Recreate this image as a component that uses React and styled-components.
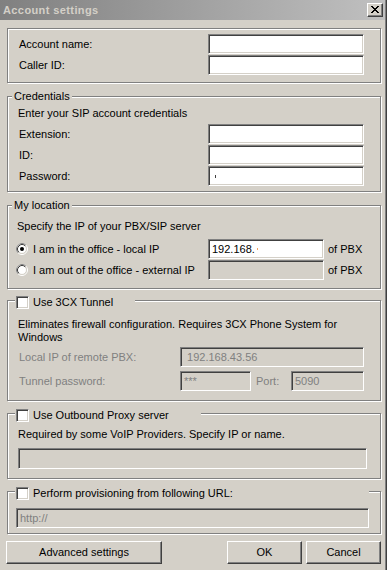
import React from "react";
import styled, { createGlobalStyle } from "styled-components";

const GlobalStyle = createGlobalStyle`
  html, body {
    margin: 0;
    padding: 0;
    background: #d4d0c8;
  }
  body {
    font-family: "Liberation Sans", Arial, sans-serif;
    font-size: 11px;
    color: #000;
  }
`;

const Window = styled.div`
  width: 387px;
  height: 570px;
  box-sizing: border-box;
  border-right: 1px solid #404040;
  background: #d4d0c8;
  overflow: hidden;
`;

const Client = styled.div`
  height: 100%;
  border-right: 1px solid #808080;
  display: flex;
  flex-direction: column;
`;

const TitleBar = styled.div`
  height: 20px;
  flex: none;
  display: flex;
  align-items: center;
  padding: 0 2px 0 3px;
  background: linear-gradient(to right, #808080, #c0c0c0);
`;

const Title = styled.div`
  flex: 1;
  color: #d4d0c8;
  font-weight: bold;
  letter-spacing: 0.4px;
  line-height: 13px;
`;

const CloseButton = styled.div`
  width: 16px;
  height: 14px;
  box-sizing: border-box;
  display: flex;
  align-items: center;
  justify-content: center;
  background: #d4d0c8;
  border: 1px solid;
  border-color: #fff #404040 #404040 #fff;
  box-shadow: inset -1px -1px 0 #808080;
  padding: 0 1px 1px 0;
`;

const Body = styled.div`
  display: flex;
  flex-direction: column;
  padding: 8px 4px 0 7px;
`;

const Group = styled.div`
  margin-top: ${(p) => p.$mt || 0}px;
  border: 1px solid #808080;
  box-shadow: inset 1px 1px 0 #fff, 1px 1px 0 #fff;
  display: flex;
  flex-direction: column;
`;

const Legend = styled.div`
  align-self: flex-start;
  display: flex;
  align-items: center;
  gap: 4px;
  height: 13px;
  line-height: 13px;
  margin: ${(p) => p.$top}px 0 0 ${(p) => p.$x}px;
  padding: 0 2px 0 ${(p) => (p.$check ? 1 : 2)}px;
  width: ${(p) => (p.$w ? `${p.$w}px` : "auto")};
  box-sizing: border-box;
  background: #d4d0c8;
  white-space: nowrap;
`;

const GroupBody = styled.div`
  display: flex;
  flex-direction: column;
  padding: ${(p) => p.$pad};
`;

const Desc = styled.div`
  line-height: 13px;
  margin: ${(p) => p.$mt || 0}px 0 0 ${(p) => p.$ml || 0}px;
`;

const Row = styled.div`
  display: flex;
  align-items: center;
  height: ${(p) => p.$h || 20}px;
  margin-top: ${(p) => p.$mt || 0}px;
`;

const Label = styled.span`
  flex: 1;
  line-height: 13px;
  padding-left: ${(p) => p.$indent || 0}px;
  color: ${(p) => (p.$disabled ? "#808080" : "#000")};
  white-space: nowrap;
`;

const Field = styled.div`
  box-sizing: border-box;
  width: ${(p) => (p.$w ? `${p.$w}px` : "100%")};
  height: ${(p) => p.$h || 20}px;
  flex: none;
  display: flex;
  align-items: center;
  padding: 0 3px;
  border: 1px solid;
  border-color: #808080 #fff #fff #808080;
  box-shadow: inset 1px 1px 0 #404040, inset -1px -1px 0 #d4d0c8;
  background: ${(p) => (p.$disabled ? "#d4d0c8" : "#fff")};
  color: ${(p) => (p.$disabled ? "#808080" : "#000")};
  line-height: 13px;
  white-space: nowrap;
`;

const Caret = styled.span`
  display: inline-block;
  width: 1px;
  height: ${(p) => p.$h}px;
  margin-left: ${(p) => p.$ml}px;
  background: ${(p) => p.$color};
`;

const Suffix = styled.span`
  width: ${(p) => p.$w}px;
  flex: none;
  padding-left: ${(p) => p.$pl}px;
  box-sizing: border-box;
  line-height: 13px;
  color: ${(p) => (p.$disabled ? "#808080" : "#000")};
`;

const Option = styled.label`
  flex: 1;
  display: flex;
  align-items: center;
  gap: 5px;
  line-height: 13px;
  white-space: nowrap;
`;

const CheckBox = styled.span`
  width: 13px;
  height: 13px;
  flex: none;
  box-sizing: border-box;
  border: 1px solid;
  border-color: #808080 #fff #fff #808080;
  box-shadow: inset 1px 1px 0 #404040, inset -1px -1px 0 #d4d0c8;
  background: #fff;
`;

const ButtonRow = styled.div`
  display: flex;
  margin: 7px 0 0 -1px;
  gap: 4px;
`;

const Button = styled.div`
  box-sizing: border-box;
  width: ${(p) => p.$w}px;
  height: 23px;
  margin-left: ${(p) => (p.$push ? "auto" : "0")};
  display: flex;
  align-items: center;
  justify-content: center;
  border: 1px solid;
  border-color: #fff #404040 #404040 #fff;
  box-shadow: inset -1px -1px 0 #808080;
  background: #d4d0c8;
  line-height: 13px;
`;

const CloseGlyph = () => (
  <svg width="8" height="7" viewBox="0 0 8 7" shapeRendering="crispEdges">
    <path
      fill="#000"
      d="M0 0h2v1H0zM6 0h2v1H6zM1 1h2v1H1zM5 1h2v1H5zM2 2h4v1H2zM3 3h2v1H3zM2 4h4v1H2zM1 5h2v1H1zM5 5h2v1H5zM0 6h2v1H0zM6 6h2v1H6z"
    />
  </svg>
);

const Radio = ({ checked }) => (
  <svg width="12" height="12" viewBox="0 0 12 12" style={{ flex: "none" }}>
    <circle cx="6" cy="6" r="5.5" fill="none" stroke="#fff" />
    <path d="M2.11 9.89A5.5 5.5 0 0 1 9.89 2.11" fill="none" stroke="#808080" />
    <circle cx="6" cy="6" r="4.5" fill="#fff" stroke="#d4d0c8" />
    <path d="M2.82 9.18A4.5 4.5 0 0 1 9.18 2.82" fill="none" stroke="#404040" />
    {checked && <circle cx="6" cy="6" r="2" fill="#000" />}
  </svg>
);

export default function App() {
  return (
    <>
      <GlobalStyle />
      <Window>
        <Client>
          <TitleBar>
            <Title>Account settings</Title>
            <CloseButton>
              <CloseGlyph />
            </CloseButton>
          </TitleBar>

          <Body>
            <Group>
              <GroupBody $pad="5px 16px 7px 10px">
                <Row>
                  <Label $indent={1}>Account name:</Label>
                  <Field $w={156} />
                </Row>
                <Row $mt={1}>
                  <Label $indent={1}>Caller ID:</Label>
                  <Field $w={156} />
                </Row>
              </GroupBody>
            </Group>

            <Group $mt={13}>
              <Legend $top={-7} $x={4}>Credentials</Legend>
              <GroupBody $pad="4px 16px 5px 10px">
                <Desc>Enter your SIP account credentials</Desc>
                <Row $mt={4}>
                  <Label $indent={1}>Extension:</Label>
                  <Field $w={156} />
                </Row>
                <Row $mt={1}>
                  <Label $indent={1}>ID:</Label>
                  <Field $w={156} />
                </Row>
                <Row $mt={1}>
                  <Label $indent={1}>Password:</Label>
                  <Field $w={156}>
                    <Caret $h={3} $ml={3} $color="#404040" />
                  </Field>
                </Row>
              </GroupBody>
            </Group>

            <Group $mt={13}>
              <Legend $top={-7} $x={4}>My location</Legend>
              <GroupBody $pad="8px 0 8px 8px">
                <Desc $ml={1}>Specify the IP of your PBX/SIP server</Desc>
                <Row $mt={6}>
                  <Option>
                    <Radio checked />I am in the office - local IP
                  </Option>
                  <Field $w={116}>
                    192.168.
                    <Caret $h={2} $ml={2} $color="#f0a060" />
                  </Field>
                  <Suffix $w={56} $pl={4}>of PBX</Suffix>
                </Row>
                <Row $mt={1}>
                  <Option>
                    <Radio />I am out of the office - external IP
                  </Option>
                  <Field $w={116} $disabled />
                  <Suffix $w={56} $pl={4}>of PBX</Suffix>
                </Row>
              </GroupBody>
            </Group>

            <Group $mt={11}>
              <Legend $top={-5} $x={7} $w={120} $check>
                <CheckBox />
                Use 3CX Tunnel
              </Legend>
              <GroupBody $pad="9px 16px 9px 10px">
                <Desc>
                  Eliminates firewall configuration. Requires 3CX Phone System for
                  <br />
                  Windows
                </Desc>
                <Row $mt={3}>
                  <Label $indent={1} $disabled>Local IP of remote PBX:</Label>
                  <Field $w={184} $disabled>
                    &nbsp;192.168.43.56
                  </Field>
                </Row>
                <Row $mt={4}>
                  <Label $indent={1} $disabled>Tunnel password:</Label>
                  <Field $w={71} $disabled>***</Field>
                  <Suffix $w={40} $pl={5} $disabled>Port:</Suffix>
                  <Field $w={73} $disabled>5090</Field>
                </Row>
              </GroupBody>
            </Group>

            <Group $mt={12}>
              <Legend $top={-5} $x={7} $w={186} $check>
                <CheckBox />
                Use Outbound Proxy server
              </Legend>
              <GroupBody $pad="6px 13px 9px 10px">
                <Desc>Required by some VoIP Providers. Specify IP or name.</Desc>
                <Row $mt={7} $h={21}>
                  <Field $h={21} $disabled />
                </Row>
              </GroupBody>
            </Group>

            <Group $mt={12}>
              <Legend $top={-5} $x={7} $w={354} $check>
                <CheckBox />
                Perform provisioning from following URL:
              </Legend>
              <GroupBody $pad="8px 11px 5px 8px">
                <Row>
                  <Field $disabled>http://</Field>
                </Row>
              </GroupBody>
            </Group>

            <ButtonRow>
              <Button $w={156}>Advanced settings</Button>
              <Button $w={75} $push>OK</Button>
              <Button $w={75}>Cancel</Button>
            </ButtonRow>
          </Body>
        </Client>
      </Window>
    </>
  );
}
